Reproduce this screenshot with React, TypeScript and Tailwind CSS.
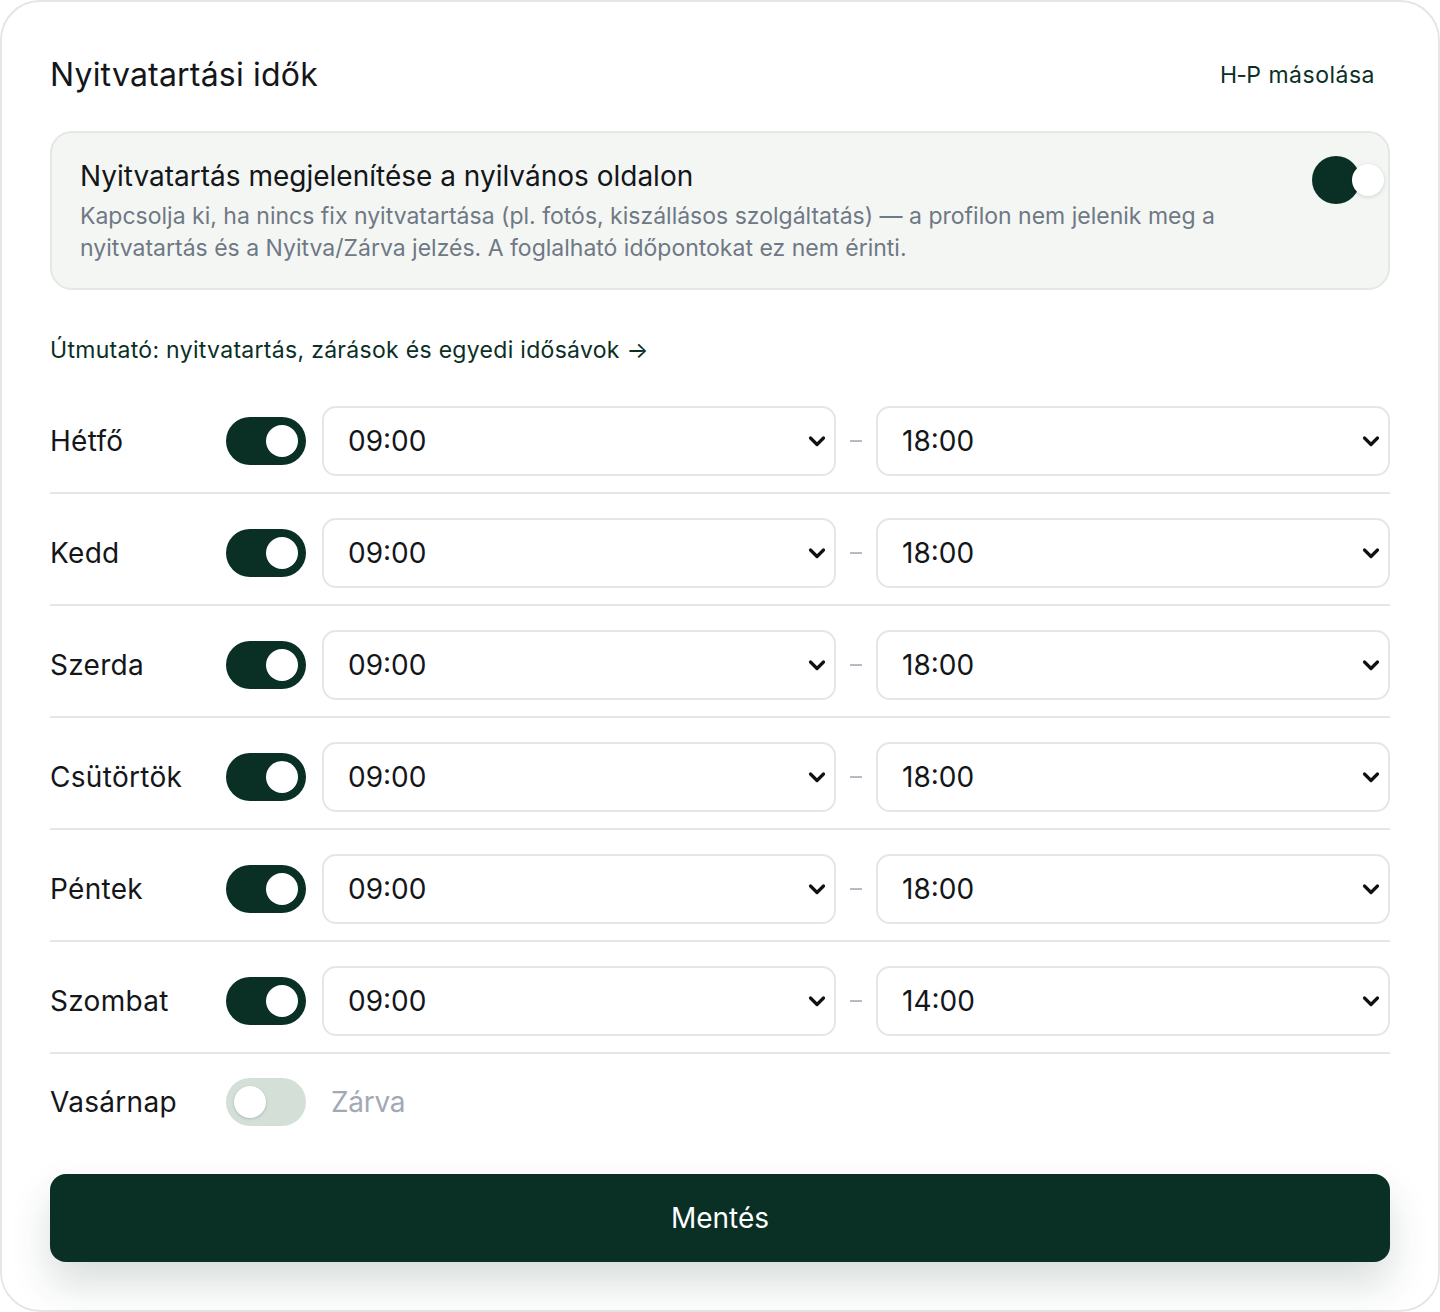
import React from "react";

const days = [
  { name: "Hétfő", open: true, from: "09:00", to: "18:00" },
  { name: "Kedd", open: true, from: "09:00", to: "18:00" },
  { name: "Szerda", open: true, from: "09:00", to: "18:00" },
  { name: "Csütörtök", open: true, from: "09:00", to: "18:00" },
  { name: "Péntek", open: true, from: "09:00", to: "18:00" },
  { name: "Szombat", open: true, from: "09:00", to: "14:00" },
  { name: "Vasárnap", open: false, from: "", to: "" },
];

function Chevron() {
  return (
    <svg width="20" height="20" viewBox="0 0 20 20" className="shrink-0">
      <path d="M3.5 7 L10 13.5 L16.5 7" fill="none" stroke="#111" strokeWidth="3.2" strokeLinecap="round" strokeLinejoin="round" />
    </svg>
  );
}

function Select({ value }: { value: string }) {
  return (
    <div className="flex-1 h-[70px] border-2 border-[#e3e8e5] rounded-[14px] bg-white flex items-center justify-between pl-6 pr-[7px]">
      <span className="text-[28px] text-[#14161a]">{value}</span>
      <Chevron />
    </div>
  );
}

function Toggle({ on }: { on: boolean }) {
  return on ? (
    <div className="w-20 h-12 rounded-full bg-[#0a2f25] flex items-center justify-end pr-2 shrink-0">
      <div className="w-8 h-8 rounded-full bg-white" />
    </div>
  ) : (
    <div className="w-20 h-12 rounded-full bg-[#d4dfd8] flex items-center pl-2 shrink-0">
      <div className="w-8 h-8 rounded-full bg-white shadow-[0_1px_3px_rgba(0,0,0,0.18)]" />
    </div>
  );
}

export default function App() {
  return (
    <div className="w-[1440px] h-[1312px] bg-white" style={{ fontFamily: "Inter, 'Noto Sans', sans-serif" }}>
      <div className="h-full border-2 border-[#e3e8e5] rounded-[40px] p-12 flex flex-col">
        <div className="flex items-center justify-between h-[50px]">
          <h1 className="text-[32px] text-[#14161a] tracking-[0.2px] font-normal">Nyitvatartási idők</h1>
          <span className="text-[23px] text-[#0b2f26] tracking-[0.5px] mr-[15px]">H‑P másolása</span>
        </div>

        <div className="mt-[31px] border-2 border-[#e3e8e5] rounded-[22px] bg-[#f4f6f3] px-7 py-6 flex items-start justify-between">
          <div className="flex-1 pr-8">
            <div className="text-[28px] leading-[38px] text-[#14161a]">Nyitvatartás megjelenítése a nyilvános oldalon</div>
            <div className="mt-[5px] text-[23px] leading-[32px] text-[#6f7885]">
              Kapcsolja ki, ha nincs fix nyitvatartása (pl. fotós, kiszállásos szolgáltatás) — a profilon nem jelenik meg a nyitvatartás és a Nyitva/Zárva jelzés. A foglalható időpontokat ez nem érinti.
            </div>
          </div>
          <div className="relative w-12 h-12 shrink-0 -mt-px">
            <div className="w-12 h-12 rounded-full bg-[#0a2f25]" />
            <div className="absolute left-10 top-2 w-8 h-8 rounded-full bg-white shadow-[0_1px_4px_rgba(0,0,0,0.15)]" />
          </div>
        </div>

        <div className="mt-[44px] text-[23px] leading-[32px] text-[#0b2f26] tracking-[0.3px]">
          Útmutató: nyitvatartás, zárások és egyedi idősávok →
        </div>

        <div className="mt-6 flex flex-col gap-2">
          {days.map((d, i) => (
            <div
              key={d.name}
              className={
                i < days.length - 1
                  ? "flex items-center gap-4 py-4 border-b-2 border-[#e3e8e5]"
                  : "flex items-center gap-4 py-4"
              }
            >
              <div className="w-[160px] text-[28px] text-[#14161a] tracking-[0.3px]">{d.name}</div>
              <Toggle on={d.open} />
              {d.open ? (
                <div className="flex-1 flex items-center gap-[14px]">
                  <Select value={d.from} />
                  <div className="w-3 h-[2px] bg-[#b5bcc5]" />
                  <Select value={d.to} />
                </div>
              ) : (
                <span className="ml-[9px] text-[28px] text-[#a3a9b4] tracking-[-0.3px]">Zárva</span>
              )}
            </div>
          ))}
        </div>

        <button className="mt-8 h-[88px] w-full rounded-[16px] bg-[#0a2f25] text-white text-[28px] shadow-[0_22px_40px_rgba(10,47,37,0.16)]">
          Mentés
        </button>
      </div>
    </div>
  );
}
